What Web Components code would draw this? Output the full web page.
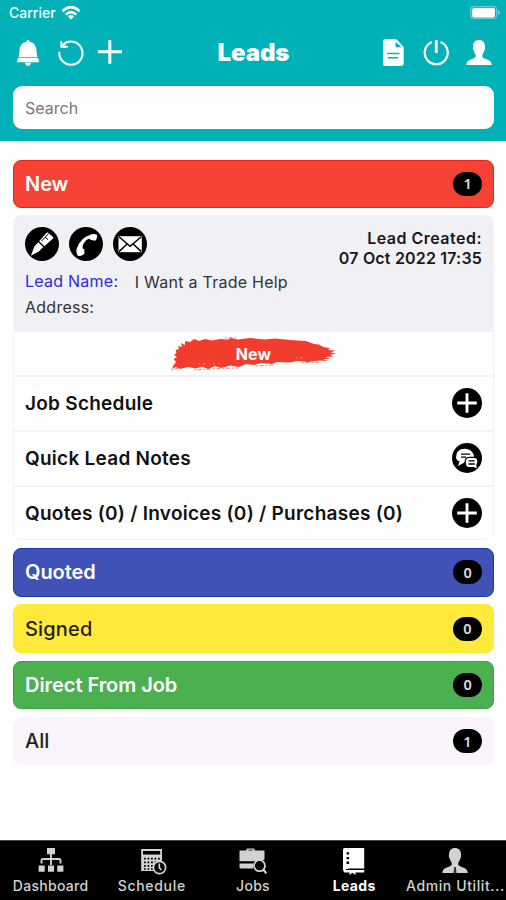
<!DOCTYPE html>
<html lang="en">
<head>
<meta charset="utf-8">
<title>Leads</title>
<style>
html,body{margin:0;height:100%;background:#fff}
body{font-family:Inter,"Liberation Sans",sans-serif;color:#111}
</style>
</head>
<body>
<leads-app></leads-app>
<script>
const ICONS = {
  wifi: ['0 0 20 16', '<g fill="none" stroke="currentColor" stroke-width="2.6"><path d="M1.4 6.2Q10-1.8 18.6 6.2"/><path d="M4.8 9.6Q10 4.6 15.2 9.6"/></g><path d="M10 14.6L6.9 11.5Q10 8.7 13.1 11.5Z"/>'],
  battery: ['0 0 31 14', '<rect x=".7" y=".7" width="26" height="11.8" rx="3.2" fill="none" stroke="currentColor" stroke-opacity=".4" stroke-width="1.2"/><rect x="2.2" y="1.9" width="22.8" height="9.6" rx="1.8"/><path d="M28.1 4.5Q30 5 30 6.6T28.1 8.7Z" fill-opacity=".5"/>'],
  bell: ['0 0 28 28', '<path d="M14 .9c1 0 1.5.7 1.5 1.8 4.4.8 6.7 4.1 6.9 8 .2 3 .3 5.7 1.1 7.6h-19c.8-1.9 1-4.6 1.1-7.6.2-3.9 2.5-7.2 6.9-8C12.500 1.600 13 .9 14 .9Z"/><path d="M4.300 19.100H23.700L25 21.100V23.200H3V21.100ZM11 23.800H17Q16.600 26.900 14 26.900T11 23.800Z"/>'],
  refresh: ['0 0 28 28', '<path d="M2.400 12.800A11.600 11.600 0 1 0 6 5.700" fill="none" stroke="currentColor" stroke-width="2.100"/><path d="M4.300 2V7.800H10.800M4.300 7.800L8.500 4" fill="none" stroke="currentColor" stroke-width="1.900"/>'],
  plus: ['0 0 28 28', '<path d="M12.300 .9H15.300V11.200H26V14.200H15.300V24.700H12.300V14.200H1.900V11.200H12.300Z"/>'],
  doc: ['-.5 0 28 28', '<path fill-rule="evenodd" d="M5 .3H17L24.200 8V24.500Q24.200 26.900 21.800 26.900H5.500Q3.500 26.900 3.500 24.900V1.800Q3.500 .3 5 .3ZM16.100 2.700V8.300H22ZM7.600 13.800V15.300H20V13.800ZM8.100 17.900V19.400H18.500V17.900Z"/>'],
  power: ['0 0 28 28', '<path d="M9.900 3.100A11.500 11.500 0 1 0 18.600 3.100" fill="none" stroke="currentColor" stroke-width="2.200"/><path d="M12.800 1.200H15.700V14H12.800Z"/>'],
  person: ['0 0 28 28', '<path d="M14 1C17.800 1 20 3.500 20 7.300 20 8.400 20.300 8.700 20 10 19.800 11 19.200 11.500 19 12.300 18.700 14.100 17.300 15 17.200 16.500 17.100 18 17.700 18.700 19.500 19.400L24 21.200Q26.500 22.300 26.800 25.900H1.200Q1.500 22.300 4 21.200L8.500 19.400C10.300 18.700 10.900 18 10.800 16.500 10.700 15 9.300 14.100 9 12.300 8.800 11.500 8.200 11 8 10 7.700 8.700 8 8.400 8 7.300 8 3.500 10.200 1 14 1Z"/>'],
  admin: ['0 0 30 30', '<path d="M15 1C18.800 1 21 3.500 21 7.300 21 8.400 21.300 8.700 21 10 20.800 11 20.200 11.500 20 12.300 19.700 14.100 18.300 15 18.200 16.500 18.100 18 18.700 18.700 20.500 19.400L25 21.200Q27.500 22.300 27.800 25.900H2.200Q2.500 22.300 5 21.200L9.500 19.400C11.300 18.700 11.900 18 11.800 16.500 11.700 15 10.300 14.100 10 12.300 9.800 11.500 9.200 11 9 10 8.700 8.700 9 8.400 9 7.300 9 3.500 11.200 1 15 1Z"/><path d="M14.200 20H15.800L16.500 26H13.500Z" fill="#333"/>'],
  pen: ['0 0 34 34', '<circle cx="17" cy="17" r="17" fill="#000"/><path fill="#fff" d="M5.800 28.800L9.500 19.200 13.300 15.300 18.200 20.100 14.100 24.300ZM14.200 14.200L21.300 5.900Q22 5 23 5.800L27.800 9.800Q28.700 10.600 28 11.500L19.400 19.200Z"/><path d="M20.200 10.400L23 12.600M23.700 6.500L16.500 14.100" stroke="#000" stroke-width="1" fill="none"/>'],
  phone: ['0 0 34 34', '<circle cx="17" cy="17" r="17" fill="#000"/><path fill="#fff" d="M20.300 8.300Q23.700 6.300 27.500 7.500 28.700 8.300 27.800 10.900 27.300 13.300 25.900 13.800L21.400 12.700 20.200 11.500Q17.200 12.600 15.100 15.800 13.300 18.500 13.500 21.200L15.300 22.500 15.500 26.600Q14.700 28 12 28.700 9.300 29.500 8.700 28.500 6.500 25.500 7.800 21.400 9.500 16.300 13.300 12.500 16.800 9 20.300 8.300Z"/>'],
  mail: ['0 0 34 34', '<circle cx="17" cy="17" r="17" fill="#000"/><rect x="5.500" y="9.200" width="23.300" height="16" fill="#fff"/><path d="M6 9.800L17.100 19.300 28.300 9.800M6 24.600L14.100 17M28.300 24.600L20.200 17" fill="none" stroke="#000" stroke-width="1.500"/>'],
  add: ['0 0 30 30', '<circle cx="15" cy="15" r="15" fill="#000"/><path d="M15 5.200V24.800M5.200 15H24.800" stroke="#fff" stroke-width="2.900"/>'],
  chat: ['0 0 30 30', '<circle cx="15" cy="15" r="15" fill="#000"/><path fill="#fff" d="M4 14Q4 6 13 5.800 19 5.900 21.600 11.500L22 13.800H17.500Q12.700 14 12.700 18.500L12 19.800 6 23 7.500 18.600Q4 17 4 14Z"/><path d="M9 11.200H18M9 14.200H14" stroke="#000" stroke-width="1.300"/><path fill="#fff" d="M16.500 15H22.500Q25.300 15.200 25.300 18.300 25.300 20.600 24.300 21.500L24.700 25.300 21.500 24H16.500Q13.800 23.700 13.800 19.500T16.500 15Z"/><path d="M16.500 17.900H22.700M16.500 21H22.700" stroke="#000" stroke-width="1.300"/>'],
  org: ['0 0 30 30', '<path d="M11 1H19V7.200H11ZM2.600 18.500H8.700V24.700H2.600ZM12 18.500H18V24.700H12ZM21.300 18.500H27.400V24.700H21.300Z"/><path d="M15 7V18M5.500 16.500V13.500Q5.500 12 7 12H23Q24.500 12 24.500 13.500V16.500" fill="none" stroke="currentColor" stroke-width="1.900"/>'],
  calendar: ['0 0 30 30', '<path fill-rule="evenodd" d="M4.200 2H25V13.500H4.200ZM6 4V7.500H23.200V4Z"/><path d="M4.200 11H25V18L19 24H4.200Z"/><path d="M7 11.700H23.500M7 15.300H20M7 18.900H17M7 22H16" stroke="#000" stroke-width="1.700" stroke-dasharray="1.800 1.700"/><circle cx="22.500" cy="20.500" r="6.100" fill="#000" stroke="currentColor" stroke-width="1.700"/><path d="M22.300 16.500V20.700L24.300 23" fill="none" stroke="currentColor" stroke-width="1.700"/>'],
  jobs: ['0 0 30 30', '<path fill-rule="evenodd" d="M1.500 3.500H8L9 1.500H16L17 3.500H26.500V12.300L24 14 18 14.300 1.500 14.300ZM10.500 2.800V3.600H14.800V2.800ZM1.500 16.400H15.500L15 21.500H3Q1.500 21.500 1.500 20Z"/><circle cx="21.500" cy="18.700" r="5.500" fill="#000" stroke="currentColor" stroke-width="1.800"/><path d="M25.200 22.500L28.400 26.400" stroke="currentColor" stroke-width="2.200"/>'],
  book: ['0 0 30 30', '<path fill-rule="evenodd" d="M5.500 1H25.200V21.500H9V23H25.200V25.600H5.500Q4 24.500 4 22V2.500Q4 1 5.500 1Z"/><path d="M8.800 5.200V17.500" stroke="#000" stroke-width="2.500" stroke-dasharray="2.400 2.300"/><path d="M7 22.500H24" stroke="#000" stroke-width="1"/><path d="M10.500 23.200H16.500V28L13.500 25.800 10.500 28Z"/>']
};
const define = (name, template) => customElements.define(name, class extends HTMLElement {
  constructor() {
    super();
    this.attachShadow({mode: 'open'}).innerHTML = typeof template === 'function' ? template(this) : template;
  }
});

define('ui-icon', el => {
  const [box, art] = ICONS[el.getAttribute('name')];
  const [, , w, h] = box.split(' ');
  return `<style>:host{display:block;flex:none;width:${w}px;height:${h}px}svg{display:block}</style>
  <svg width="${w}" height="${h}" viewBox="${box}" fill="currentColor">${art}</svg>`;
});

define('status-bar', `<style>
:host{display:flex;align-items:center;height:26px;padding:0 5px 0 9px;box-sizing:border-box;font:500 14px/26px Inter,sans-serif}
.carrier{letter-spacing:0;margin-right:5.500px}.battery{margin-left:auto}
</style><span class="carrier">Carrier</span><ui-icon name="wifi"></ui-icon><ui-icon class="battery" name="battery"></ui-icon>`);

define('app-header', `<style>
:host{display:block;height:141px;background:#00b1b8;color:#fff}
.bar{display:grid;grid-template-columns:1fr auto 1fr;align-items:center;height:28px;margin-top:13px;padding:0 13px 0 14px}
.group{display:flex;gap:15px}.group.right{justify-content:flex-end}.tight{margin-left:-4px}
h1{margin:0;font:900 24px/28px Inter,sans-serif;letter-spacing:-.1px}
.search{display:flex;align-items:center;height:43px;margin:19px 12px 0 13px;padding:0 12px;border-radius:9px;background:#fff;color:#777;font:400 16px/43px Inter,sans-serif}
.search span{padding-top:1px}
</style>
<status-bar></status-bar>
<div class="bar"><div class="group"><ui-icon name="bell"></ui-icon><ui-icon name="refresh"></ui-icon><ui-icon class="tight" name="plus"></ui-icon></div>
<h1>Leads</h1>
<div class="group right"><ui-icon name="doc"></ui-icon><ui-icon name="power"></ui-icon><ui-icon name="person"></ui-icon></div></div>
<div class="search"><span>Search</span></div>`);

define('count-badge', `<style>:host{display:flex;align-items:center;justify-content:center;width:29px;height:24px;border-radius:12px;background:#000;color:#ddd;font:600 14.500px/23px "Noto Sans",sans-serif}</style><slot></slot>`);

define('lead-section', el => `<style>
:host{display:flex;align-items:center;justify-content:space-between;height:48.500px;box-sizing:border-box;padding:0 11px;border-radius:8px;border:1px solid var(--edge);border-bottom-width:1.500px;background:var(--fill);color:var(--ink,#fff);font:var(--weight,600) 20px/46px Inter,sans-serif;letter-spacing:var(--track,-.05px)}
</style><slot></slot><count-badge>${el.getAttribute('count')}</count-badge>`);

define('brush-label', `<style>
:host{display:grid;place-items:center;width:168px;height:36px;color:#fff;font:700 16px/20px Inter,sans-serif}
svg,span{grid-area:1/1}span{padding-top:2px;letter-spacing:.15px}
</style><svg width="168" height="36" viewBox="0 0 168 36"><path fill="#f23d2e" d="M2 34L4.500 29 6 27 3.500 24 7 22 4 20 6.500 18 5.500 15 9 14 8 11 12 12 11 8 15 10 15 6 20 7 24 4 29 6 35 4 42 5.500 50 4 58 4.500 61 3 68 4.500 80 3 95 4.500 105 3.500 120 5 136 6 144 9 149 9.500 153 12 160 13 158 15 165 15.500 161 17.500 166 18.500 160 20 164 21.500 155 22 160 24 153 24 158 26 149 25.500 138 27 127 26 120 27.500 107 27 102 29 91 28 84 30 76 29 69 32 60 30.500 51 33 45 31 38 34 32 31.500 26 33.500 18 32 10 34 6 32Z"/><path d="M1 35L12 32M24 35L50 33.500 68 33M86 31L103 30M132 28L151 27M55 3L66 2.500M2 31L8 30" fill="none" stroke="#f23d2e" stroke-dasharray="2 1.500 4 2" stroke-opacity=".65"/><path d="M29 29L50 28.500M126 23L140 22.500M39 25L43 24.500" fill="none" stroke="#fff" stroke-dasharray="1 3 2 4" stroke-opacity=".4"/></svg><span><slot></slot></span>`);

define('card-row', el => `<style>
:host{display:flex;align-items:center;justify-content:space-between;height:53px;padding:0 11px;border-top:2px solid #f3f3f5;font:600 19px/53px Inter,sans-serif;letter-spacing:.26px}
</style><slot></slot><ui-icon name="${el.getAttribute('icon')}"></ui-icon>`);

define('lead-card', `<style>
:host{display:block;height:325px;box-sizing:border-box;border:1px solid #f3f3f5;border-radius:8px;overflow:hidden}
.info{height:116px;background:#f0f0f5;box-sizing:border-box;padding:11px 11px 0;font:400 16px/26px Inter,sans-serif;letter-spacing:.25px;color:#333}
.top{display:flex;justify-content:space-between}
.icons{display:flex;gap:10px}
.date{text-align:right;font-weight:600;line-height:20px;font-size:16px;letter-spacing:.18px;color:#181818;padding-top:1px}
.date div{height:20px;white-space:nowrap}.made{letter-spacing:.48px}
.name{display:flex;gap:16.500px;height:26px;margin-top:.500px}
.name b{font-weight:400;color:#3228dc;margin-top:-.5px}
.name span{padding-top:.5px}
.stroke{display:flex;justify-content:center;height:43px;align-items:center}
</style>
<div class="info"><div class="top"><div class="icons"><ui-icon name="pen"></ui-icon><ui-icon name="phone"></ui-icon><ui-icon name="mail"></ui-icon></div>
<div class="date"><div class="made">Lead Created:</div><div>07 Oct 2022 17:35</div></div></div>
<div class="name"><b>Lead Name:</b><span>I Want a Trade Help</span></div><div>Address:</div></div>
<div class="stroke"><brush-label>New</brush-label></div>
<card-row icon="add">Job Schedule</card-row><card-row icon="chat">Quick Lead Notes</card-row><card-row icon="add">Quotes (0) / Invoices (0) / Purchases (0)</card-row>`);

define('tab-item', el => `<style>
:host{display:flex;flex-direction:column;align-items:center;min-width:0;color:#d2d2d2;font:500 14px/18px Inter,sans-serif;white-space:nowrap;letter-spacing:var(--track,.3px)}
:host([active]){color:#fff;font-weight:700}
</style><ui-icon name="${el.getAttribute('icon')}"></ui-icon><slot></slot>`);

define('tab-bar', `<style>
:host{display:grid;grid-template-columns:repeat(5,minmax(0,1fr));height:60px;box-sizing:border-box;border-top:1px solid #444;background:#000;padding-top:6px}
</style>
<tab-item icon="org">Dashboard</tab-item><tab-item icon="calendar" style="--track:.7px">Schedule</tab-item><tab-item icon="jobs">Jobs</tab-item><tab-item icon="book" active>Leads</tab-item><tab-item icon="admin" style="--track:.6px">Admin Utilit...</tab-item>`);

define('leads-app', `<style>
:host{display:flex;flex-direction:column;height:900px;overflow:hidden}
main{flex:1;display:flex;flex-direction:column;gap:7.750px;padding:18.500px 12px 0 13px}
lead-card{margin:-1px 0 .500px}
</style>
<app-header></app-header>
<main>
<lead-section count="1" style="--fill:#f74336;--edge:#f02318">New</lead-section>
<lead-card></lead-card>
<lead-section count="0" style="--fill:#4052b5;--edge:#1738ad">Quoted</lead-section>
<lead-section count="0" style="--fill:#ffea3b;--edge:#ffe72a;--ink:#222;--weight:500;--track:.15px">Signed</lead-section>
<lead-section count="0" style="--fill:#4caf50;--edge:#33a540">Direct From Job</lead-section>
<lead-section count="1" style="--fill:#f8f4f9;--edge:#f8f5f9;--ink:#222;--weight:500;--track:0">All</lead-section>
</main>
<tab-bar></tab-bar>`);
</script>
</body>
</html>
